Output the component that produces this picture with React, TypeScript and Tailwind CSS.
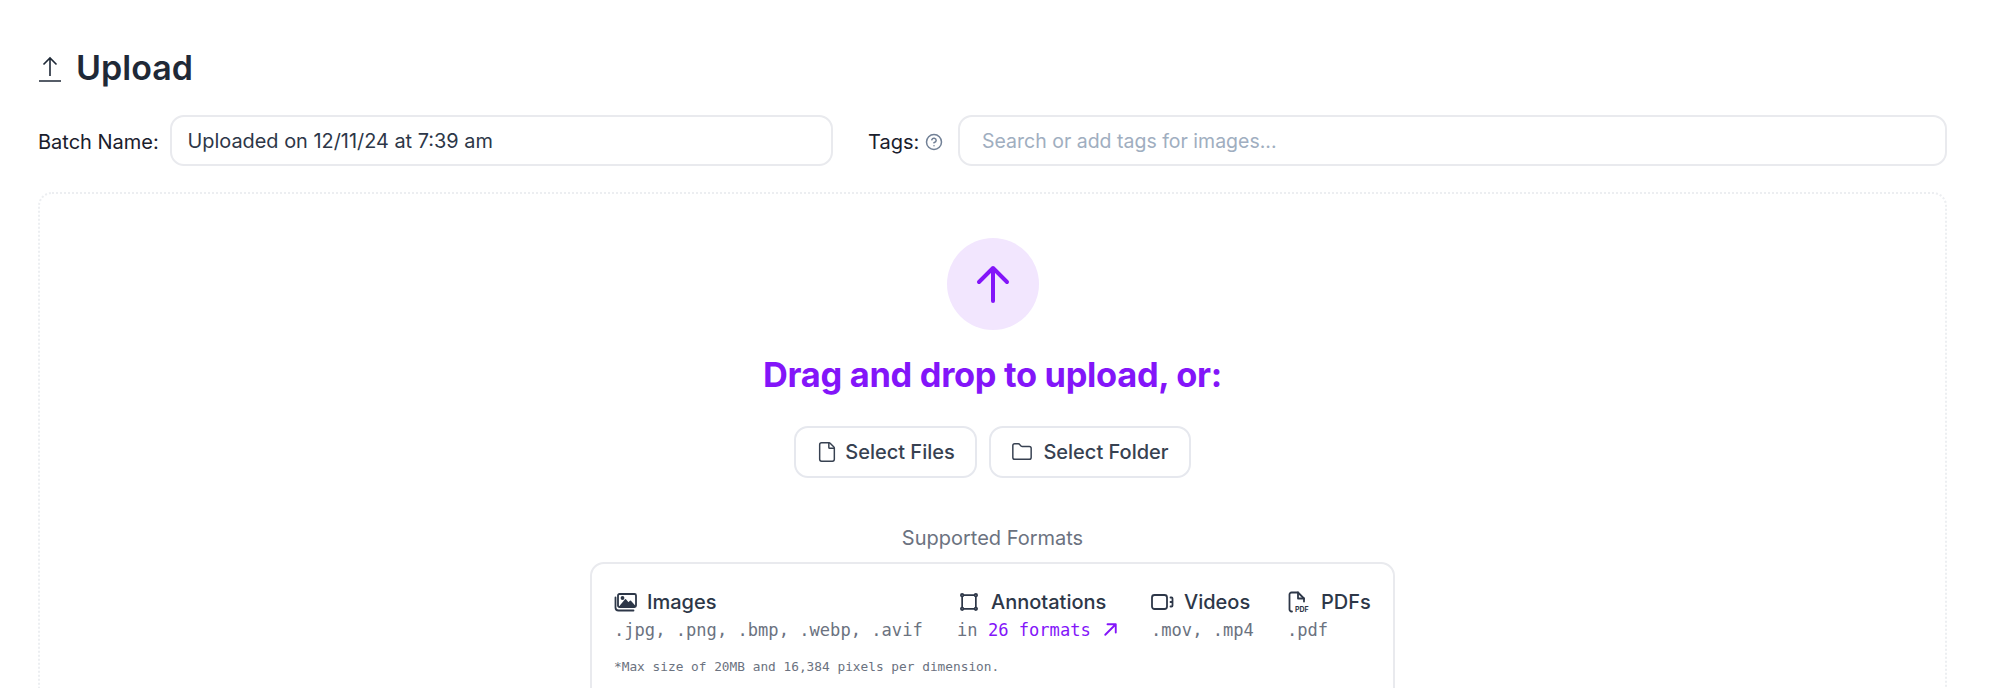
import { File, Folder, HelpCircle } from 'lucide-react'

const mono = "font-['DejaVu_Sans_Mono',monospace]"

function ImagesIcon() {
  return (
    <svg viewBox="0 0 24 24" className="w-[24px] h-[24px] shrink-0 text-[#2d3748]" fill="none" stroke="currentColor" strokeWidth="1.8" strokeLinecap="round" strokeLinejoin="round">
      <rect x="4" y="4" width="18" height="13" rx="1.5" />
      <path d="M1.5 7.5v10a3 3 0 0 0 3 3h15" />
      <path d="M6.5 16l5-6 3 3.5 2-2 4 4.5z" fill="currentColor" />
      <circle cx="8.5" cy="8" r="1" fill="currentColor" />
    </svg>
  )
}

function AnnotationIcon() {
  return (
    <svg viewBox="1.500 1.500 21 21" className="w-[18px] h-[18px] ml-[3px] mr-[5px] shrink-0 text-[#2d3748]" fill="none" stroke="currentColor" strokeWidth="2">
      <path d="M5.500 4h13M5.500 20h13M4 5.500v13M20 5.500v13" />
      <circle cx="4" cy="4" r="1.500" />
      <circle cx="20" cy="4" r="1.500" />
      <circle cx="4" cy="20" r="1.500" />
      <circle cx="20" cy="20" r="1.500" />
    </svg>
  )
}

function VideoIcon() {
  return (
    <svg viewBox="0 0 24 24" className="w-[24px] h-[24px] shrink-0 text-[#2d3748]" fill="none" stroke="currentColor" strokeWidth="1.8" strokeLinecap="round" strokeLinejoin="round">
      <rect x="1" y="5" width="15" height="14" rx="2.500" />
      <path d="M19.500 7.500h1a1 1 0 0 1 1 1v7a1 1 0 0 1-1 1h-1M19.500 12h1" />
    </svg>
  )
}

function PdfIcon() {
  return (
    <svg viewBox="0 0 24 24" className="w-[24px] h-[24px] shrink-0 text-[#2d3748]" fill="none" stroke="currentColor" strokeWidth="1.8" strokeLinecap="round" strokeLinejoin="round">
      <path d="M5 21.500H4.500A2 2 0 0 1 2.500 19.500V4.500A2 2 0 0 1 4.500 2.500H11l6 6v3" />
      <path d="M11 2.500v6h6" />
      <text x="8" y="22" fontSize="7" fontWeight="700" stroke="none" fill="currentColor" fontFamily="Inter, sans-serif">PDF</text>
    </svg>
  )
}

function Format({ icon, title, className, gap, children }: { icon: React.ReactNode; title: string; className: string; gap: string; children: React.ReactNode }) {
  return (
    <div className={className}>
      <div className={`flex items-center h-[28px] ${gap}`}>
        {icon}
        <span className="text-[20px] font-medium text-[#2d3748] leading-[28px]">{title}</span>
      </div>
      <div className={`${mono} text-[17.100px] leading-[24px] mt-[2px] text-[#6b7280] whitespace-nowrap`}>{children}</div>
    </div>
  )
}

export default function App() {
  return (
    <div className="h-[688px] overflow-hidden bg-white pl-[38px] pr-[53px] font-['Inter',sans-serif]">
      <div className="flex items-center gap-[14px] pt-[44px] h-[91px] text-[#1f2937]">
        <svg viewBox="0 0 24 30" className="w-[24px] h-[30px]" fill="none" stroke="currentColor" strokeWidth="1.6">
          <path d="M12 23V5M5.500 11.500L12 5l6.500 6.500M1 28h22" />
        </svg>
        <h1 className="text-[34px] font-semibold leading-[40px]">Upload</h1>
      </div>

      <div className="flex items-center mt-[24px] h-[51px]">
        <label className="text-[20px] text-[#1a202c] w-[132px] pt-[2px] whitespace-nowrap">Batch Name:</label>
        <div className="w-[663px] h-full rounded-[14px] border-2 border-[#e9eaee] flex items-center pl-[15.500px] pt-[3px] text-[19.900px] text-[#2d3748]">
          Uploaded on 12/11/24 at 7:39 am
        </div>
        <div className="ml-[35px] w-[90px] flex items-center gap-[6px] pt-[2px] text-[20px] text-[#1a202c]">
          Tags:
          <HelpCircle className="w-[18px] h-[18px] text-[#718096]" />
        </div>
        <div className="flex-1 h-full rounded-[14px] border-2 border-[#e9eaee] flex items-center px-[22px] pt-[3px] text-[19.500px] text-[#a0aec0]">
          Search or add tags for images...
        </div>
      </div>

      <div className="mt-[26px] h-[600px] rounded-[14px] border-2 border-dotted border-[#eceef1] flex flex-col items-center pt-[44px]">
        <div className="w-[92px] h-[92px] rounded-full bg-[#f2e6fe] flex items-center justify-center">
          <svg viewBox="0 0 36 40" className="w-[36px] h-[40px] text-[#8315f9]" fill="none" stroke="currentColor" strokeWidth="4" strokeLinecap="round" strokeLinejoin="round">
            <path d="M18 37V4M4 18L18 4l14 14" />
          </svg>
        </div>
        <h2 className="mt-[22px] text-[34.400px] leading-[46px] font-bold tracking-[-0.3px] text-[#8315f9]">Drag and drop to upload, or:</h2>
        <div className="flex gap-[12px] mt-[28px]">
          <button className="flex items-center justify-center gap-[7px] w-[183px] h-[52px] rounded-[14px] border-2 border-[#e6e8ee] text-[20px] font-medium text-[#374151]">
            <File className="w-[22px] h-[22px]" strokeWidth={1.6} />
            Select Files
          </button>
          <button className="flex items-center justify-center gap-[10px] w-[202px] h-[52px] rounded-[14px] border-2 border-[#e6e8ee] text-[20px] font-medium text-[#374151]">
            <Folder className="w-[22px] h-[22px]" strokeWidth={1.6} />
            Select Folder
          </button>
        </div>
        <div className="mt-[46px] text-[20px] leading-[28px] text-[#6b7280]">Supported Formats</div>
        <div className="mt-[10px] w-[805px] h-[200px] shrink-0 rounded-[14px] border-2 border-[#e9eaee] pt-[24px] pl-[22px]">
          <div className="flex">
            <Format icon={<ImagesIcon />} title="Images" gap="gap-[9px]" className="w-[343px]">.jpg, .png, .bmp, .webp, .avif</Format>
            <Format icon={<AnnotationIcon />} title="Annotations" gap="gap-[8px]" className="w-[194px]">
              in <span className="text-[#8315f9]">26 formats</span>
              <svg viewBox="0 0 20 20" className="inline w-[15px] h-[15px] ml-[12px] mb-[4px] text-[#8315f9]" fill="none" stroke="currentColor" strokeWidth="2.500" strokeLinecap="round" strokeLinejoin="round">
                <path d="M3 17L17 3M6 3h11v11" />
              </svg>
            </Format>
            <Format icon={<VideoIcon />} title="Videos" gap="gap-[9px]" className="w-[136px]">.mov, .mp4</Format>
            <Format icon={<PdfIcon />} title="PDFs" gap="gap-[10px]" className="w-[90px]">.pdf</Format>
          </div>
          <div className={`${mono} mt-[16px] text-[12.800px] leading-[18px] text-[#6b7280]`}>*Max size of 20MB and 16,384 pixels per dimension.</div>
        </div>
      </div>
    </div>
  )
}
